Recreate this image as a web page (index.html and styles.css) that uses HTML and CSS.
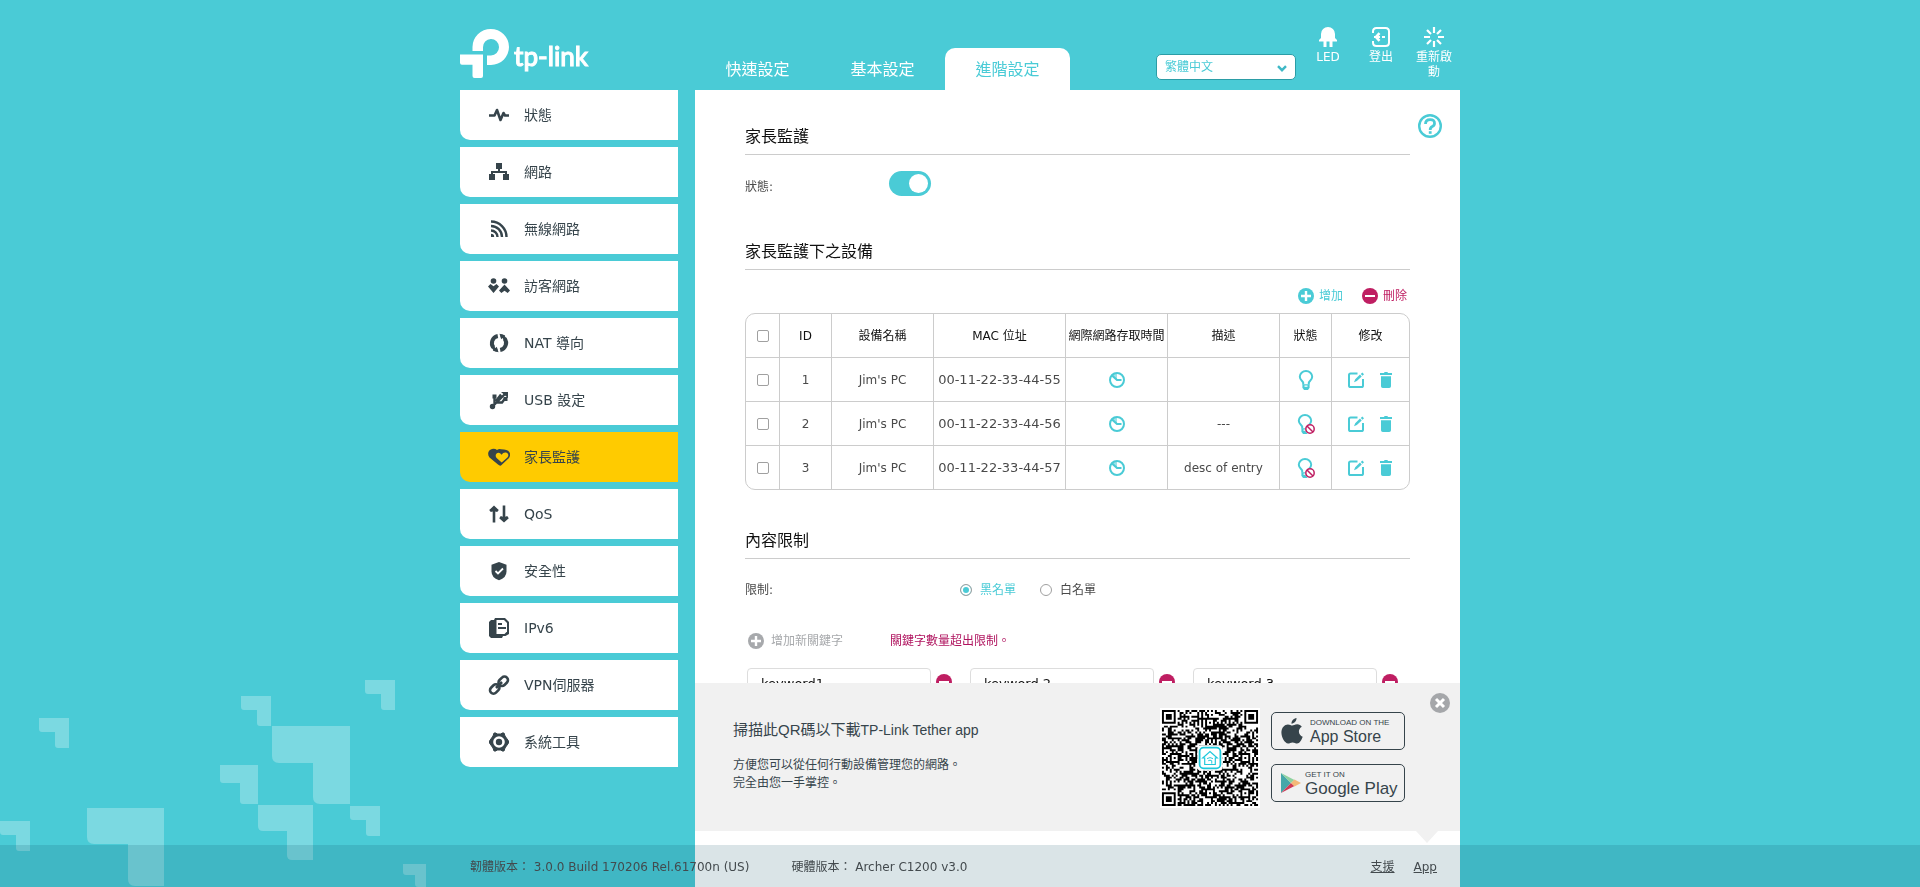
FILE: index.html
```html
<!DOCTYPE html>
<html lang="zh-Hant">
<head>
<meta charset="utf-8">
<meta name="viewport" content="width=device-width, initial-scale=1">
<title>TP-Link</title>
<link rel="stylesheet" href="styles.css">
</head>
<body>
<svg class="sprite" aria-hidden="true">
  <symbol id="i-plus" viewBox="0 0 16 16"><circle cx="8" cy="8" r="8" fill="currentColor"/><path d="M8 3v10M3 8h10" stroke="#fff" stroke-width="2.400"/></symbol>
  <symbol id="i-minus" viewBox="0 0 16 16"><circle cx="8" cy="8" r="8" fill="currentColor"/><path d="M3 8h10" stroke="#fff" stroke-width="2"/></symbol>
  <symbol id="i-clock" viewBox="0 0 16 16"><circle cx="8" cy="8" r="7" fill="none" stroke="currentColor" stroke-width="2"/><path d="M8 8L8 1A7 7 0 0 0 2.500 4z" fill="currentColor" opacity=".55"/><path d="M3 3.500L8 8h4.500" fill="none" stroke="currentColor" stroke-width="2.200"/></symbol>
  <symbol id="i-bulb" viewBox="0 0 16 20"><path d="M5.200 14.500v-1.800C5 11.300 1.800 10 1.800 6.800a6.200 5.800 0 0 1 12.400 0c0 3.200-3.200 4.500-3.400 5.900v1.800" fill="none" stroke="currentColor" stroke-width="2"/><path d="M4.400 14.300h7.200v3.400L10 20H6l-1.600-2.300z" fill="currentColor"/><path d="M6.500 15.500h3v1.300h-3z" fill="#fff"/></symbol>
  <symbol id="i-ban" viewBox="0 0 10 10"><circle cx="5" cy="5" r="5" fill="#fff"/><circle cx="5" cy="5" r="4.200" fill="none" stroke="currentColor" stroke-width="1.500"/><path d="M2 2l6 6" stroke="currentColor" stroke-width="1.500"/></symbol>
  <symbol id="i-edit" viewBox="0 0 16 16"><path d="M9.500 1.400H2.600q-1.600 0-1.600 1.600v10.400q0 1.600 1.600 1.600h10.800q1.600 0 1.600-1.600V7" fill="none" stroke="currentColor" stroke-width="2"/><path d="M6 10.200l1.200-3 4.800-4.600 1.700 1.800-4.800 4.600zM12.800 2l1.500-1.500L16 2.200l-1.500 1.500z" fill="currentColor"/></symbol>
  <symbol id="i-trash" viewBox="0 0 12 16"><path d="M0 1h4l.6-1h2.800L8 1h4v2H0zM1 4.300h10v9.900q0 1.800-1.800 1.800H2.800Q1 16 1 14.200z" fill="currentColor"/></symbol>
</svg>

<svg class="backdrop" viewBox="0 0 430 227" aria-hidden="true">
  <g fill="#fff" fill-opacity=".27">
    <path d="M39 58h30v30H58q-3 0-3-3V72H42q-3 0-3-3z"/>
    <path d="M241 36h30v30h-11q-3 0-3-3V50h-13q-3 0-3-3z"/>
    <path d="M365 20h30v30h-11q-3 0-3-3V34h-13q-3 0-3-3z"/>
    <path d="M350 146h30v30h-11q-3 0-3-3v-13h-13q-3 0-3-3z"/>
    <path d="M0 161h30v30H19q-3 0-3-3v-13H3q-3 0-3-3z"/>
    <path d="M220 105h38v39h-15q-3 0-3-3v-18h-17q-3 0-3-3z"/>
    <path d="M258 145h55v55h-21q-5 0-5-5v-24h-24q-5 0-5-5z"/>
    <path d="M272 66h78v78h-30q-7 0-7-7v-34h-34q-7 0-7-7z"/>
    <path d="M87 148h77v78h-29q-7 0-7-7v-35H94q-7 0-7-7z"/>
    <path d="M403 204h23v23h-8q-3 0-3-3v-9h-9q-3 0-3-3z"/>
  </g>
</svg>

<div class="page">
  <header class="header">
    <a class="logo" href="#" aria-label="tp-link">
      <svg width="49" height="49" viewBox="0 0 49 49" fill="#fff"><path d="M23 22H12.500V18a18.250 18 0 0 1 36.500 0A18.250 18 0 0 1 31 36h-4V26.500h4a8 8.300 0 1 0-8-8z"/><path d="M0 25.500h23V47q0 2-2 2h-6.500q-2 0-2-2V35.700H2q-2 0-2-2z"/></svg>
      <span>tp-link</span>
    </a>
    <nav class="tabs">
      <a class="tab" href="#">快速設定</a>
      <a class="tab" href="#">基本設定</a>
      <a class="tab tab-on" href="#">進階設定</a>
    </nav>
    <div class="lang">
      <select aria-label="語言"><option>繁體中文</option></select>
      <svg width="10" height="7" viewBox="0 0 10 7" fill="none" stroke="#3eb8c6" stroke-width="2.400"><path d="M1 1.200l4 4 4-4"/></svg>
    </div>
    <div class="tools">
      <button class="tool" type="button">
        <svg width="20" height="20" viewBox="0 0 20 20" fill="#fff"><path d="M3 11V7a7 7 0 0 1 14 0v4l2 2v1.500H1V13zM5.500 14H8.500v6h-3zM11.500 14h3v6h-3z"/></svg>
        <span>LED</span>
      </button>
      <button class="tool" type="button">
        <svg width="20" height="20" viewBox="0 0 20 20" fill="none" stroke="#fff" stroke-width="2"><path d="M2 6V4.500Q2 1 5.500 1h9Q18 1 18 4.500v11q0 3.500-3.500 3.500h-9Q2 19 2 15.500V14"/><path d="M11 10h3"/><path d="M8.500 6.200L5 10l3.500 3.800" stroke-width="2.600"/><path d="M3 10h6"/></svg>
        <span>登出</span>
      </button>
      <button class="tool" type="button">
        <svg width="20" height="20" viewBox="0 0 20 20" fill="none" stroke="#fff" stroke-width="2.200"><path d="M10 0v6M10 14v6M0 10h6M14 10h6M3 3l4 4M13 13l4 4M17 3l-4 4M7 13l-4 4"/></svg>
        <span>重新啟動</span>
      </button>
    </div>
  </header>

  <div class="columns">
    <nav class="side">
      <a class="item" href="#"><svg viewBox="0 0 22 22" fill="none" stroke="#36444b" stroke-width="2.600" stroke-linejoin="round"><path d="M1 11.500h5.500L9 6l3.500 10L15.500 9l1.500 2.500h4"/></svg>狀態</a>
      <a class="item" href="#"><svg viewBox="0 0 22 22" fill="#36444b"><path d="M8 2h6v6h-2v2h7v3h2v6h-6v-6h2v-1H5v1h2v6H1v-6h2v-3h7V8H8z"/></svg>網路</a>
      <a class="item" href="#"><svg viewBox="0 0 22 22" fill="none" stroke="#36444b" stroke-width="2.400"><path d="M3 3.500A15.500 15.500 0 0 1 18.500 19M3 8a11 11 0 0 1 11 11M3 12.500A6.500 6.500 0 0 1 9.500 19"/><path d="M3 15.800q3.200 0 3.200 3.200H3z" fill="#36444b" stroke="none"/></svg>無線網路</a>
      <a class="item" href="#"><svg viewBox="0 0 22 22" fill="#36444b"><circle cx="5.500" cy="6" r="2.800"/><circle cx="16.500" cy="6" r="2.800"/><path d="M0 11.500L2.500 9l3 2.200 3-2.200 2.500 2.500-5.500 6.500zM16.500 9.500l5.500 6-2.300 2.500-3.200-2.300-3.200 2.300-2.300-2.500z"/></svg>訪客網路</a>
      <a class="item" href="#"><svg viewBox="0 0 22 22" fill="none" stroke="#36444b" stroke-width="4"><path d="M9.800 4a7.200 7.200 0 0 0-4.300 11.600M12.200 18a7.200 7.200 0 0 0 4.300-11.600"/><path d="M11.500 1.800l5.700 1.400-4 4zM10.500 20.200l-5.700-1.400 4-4z" fill="#36444b" stroke="none"/><path d="M13 3.500a8 8 0 0 1 4.500 4.200M9 18.500a8 8 0 0 1-4.500-4.200" stroke-width="3"/></svg>NAT 導向</a>
      <a class="item" href="#"><svg viewBox="0 0 22 22" fill="none" stroke="#36444b" stroke-width="2.400"><path d="M5 17L17 5M6.500 15.500V8M8 13.500h6l3-4M8 12l5-6.500"/><circle cx="4.500" cy="17.500" r="2.700" fill="#36444b" stroke="none"/><path d="M13 3h7v6zM4.500 5.500h4v4h-4zM15.500 8h4v4h-4z" fill="#36444b" stroke="none"/></svg>USB 設定</a>
      <a class="item item-on" href="#"><svg viewBox="0 0 22 22"><path d="M13 19.500Q11.500 20 10 18.500L1.500 11.500C-1 8.500 0 4 4 3q3-.6 5 1 2-1.400 4-.8l3 .3c6 .3 7.500 5 5 8.500z" fill="#36444b"/><path d="M13.700 16.500L8.600 12c-1.800-2.200-.6-5 1.800-5.200q1.800 0 3.200 2 1.500-2.600 4.200-2.300c2.600.4 3.400 3.200 1.600 5.100z" fill="#ffcb00"/></svg>家長監護</a>
      <a class="item" href="#"><svg viewBox="0 0 22 22" fill="#36444b"><path d="M6 2.500l4.800 4.600-1.600 2L7.300 8.500V19.500H4.700V8.500l-1.900.6-1.600-2zM16 19.500l-4.800-4.200 1.600-2.200 1.900.6V2.500h2.600v11.200l1.900-.6 1.600 2.200z"/></svg>QoS</a>
      <a class="item" href="#"><svg viewBox="0 0 22 22"><path d="M11 2l7.500 2.700v6.800q0 6.300-7.500 8.800-7.500-2.500-7.500-8.800V4.700z" fill="#36444b"/><path d="M7.500 11l2.500 2.500 5-5" fill="none" stroke="#fff" stroke-width="1.800"/></svg>安全性</a>
      <a class="item" href="#"><svg viewBox="0 0 22 22"><path d="M1 5l2-2h3l1-2h10l4 4v12l-3.500 2H15l-1 2H3l-2-2z" fill="#36444b"/><path d="M8.500 3H16l3 3v8.500L16.500 17h-8z" fill="#fff"/><path d="M10 7h4M10 11h8" stroke="#36444b" stroke-width="2"/></svg>IPv6</a>
      <a class="item" href="#"><svg viewBox="0 0 22 22" fill="none" stroke="#36444b" stroke-width="2.600"><rect x="10" y="3.800" width="10.500" height="7" rx="3.500" transform="rotate(-45 15.200 7.300)"/><rect x="1.500" y="11.500" width="10.500" height="7" rx="3.500" transform="rotate(-45 6.700 15)"/><path d="M8 14l6-6"/></svg>VPN伺服器</a>
      <a class="item" href="#"><svg viewBox="0 0 22 22"><path d="M6 2h2l1 1h4l1-1h2l1 3 3.500 5v2L17 17l-1 3h-2l-1-1H9l-1 1H6l-1-3-3.500-5v-2L5 5z" fill="#36444b" stroke="#36444b"/><circle cx="11" cy="11" r="5.800" fill="#fff"/><circle cx="11" cy="11" r="3.200" fill="#36444b"/></svg>系統工具</a>
    </nav>

    <main class="main">
      <button class="help" type="button" aria-label="說明"><svg width="24" height="24" viewBox="0 0 24 24" fill="none" stroke="#4acbd6"><circle cx="12" cy="12" r="10.800" stroke-width="2.400"/><path d="M7.500 10q0-4.400 4.600-4.400T16.500 9.400q0 2-2.200 3T12.200 16" stroke-width="2.800"/><path d="M12.200 17.200v2.600" stroke-width="2.800"/></svg></button>

      <section>
        <h2>家長監護</h2>
        <div class="field field-switch">
          <label class="name" for="state">狀態:</label>
          <input id="state" class="switch" type="checkbox" role="switch" checked>
        </div>
      </section>

      <section class="devices">
        <h2>家長監護下之設備</h2>
        <div class="actions">
          <button class="act add" type="button"><svg class="ic"><use href="#i-plus"/></svg>增加</button>
          <button class="act del" type="button"><svg class="ic"><use href="#i-minus"/></svg>刪除</button>
        </div>
        <table class="grid">
          <colgroup><col class="c-check"><col class="c-id"><col class="c-name"><col class="c-mac"><col class="c-time"><col class="c-desc"><col class="c-state"><col></colgroup>
          <thead>
            <tr><th><input type="checkbox" class="box" aria-label="全選"></th><th>ID</th><th>設備名稱</th><th>MAC 位址</th><th>網際網路存取時間</th><th>描述</th><th>狀態</th><th>修改</th></tr>
          </thead>
          <tbody>
            <tr><td><input type="checkbox" class="box" aria-label="1"></td><td>1</td><td>Jim's PC</td><td class="mac">00-11-22-33-44-55</td>
              <td><button class="ib" type="button" aria-label="時間"><svg class="ic"><use href="#i-clock"/></svg></button></td><td></td>
              <td><button class="ib bulb" type="button" aria-label="啟用"><svg class="bl"><use href="#i-bulb"/></svg></button></td>
              <td><div class="mod"><button class="ib" type="button" aria-label="編輯"><svg class="ic"><use href="#i-edit"/></svg></button><button class="ib" type="button" aria-label="刪除"><svg class="tr"><use href="#i-trash"/></svg></button></div></td></tr>
            <tr><td><input type="checkbox" class="box" aria-label="2"></td><td>2</td><td>Jim's PC</td><td class="mac">00-11-22-33-44-56</td>
              <td><button class="ib" type="button" aria-label="時間"><svg class="ic"><use href="#i-clock"/></svg></button></td><td>---</td>
              <td><button class="ib bulb off" type="button" aria-label="停用"><svg class="bl"><use href="#i-bulb"/></svg><svg class="ban"><use href="#i-ban"/></svg></button></td>
              <td><div class="mod"><button class="ib" type="button" aria-label="編輯"><svg class="ic"><use href="#i-edit"/></svg></button><button class="ib" type="button" aria-label="刪除"><svg class="tr"><use href="#i-trash"/></svg></button></div></td></tr>
            <tr><td><input type="checkbox" class="box" aria-label="3"></td><td>3</td><td>Jim's PC</td><td class="mac">00-11-22-33-44-57</td>
              <td><button class="ib" type="button" aria-label="時間"><svg class="ic"><use href="#i-clock"/></svg></button></td><td>desc of entry</td>
              <td><button class="ib bulb off" type="button" aria-label="停用"><svg class="bl"><use href="#i-bulb"/></svg><svg class="ban"><use href="#i-ban"/></svg></button></td>
              <td><div class="mod"><button class="ib" type="button" aria-label="編輯"><svg class="ic"><use href="#i-edit"/></svg></button><button class="ib" type="button" aria-label="刪除"><svg class="tr"><use href="#i-trash"/></svg></button></div></td></tr>
          </tbody>
        </table>
      </section>

      <section class="limits">
        <h2>內容限制</h2>
        <div class="field field-radio">
          <span class="name">限制:</span>
          <div class="radios">
            <label><input type="radio" name="list" checked><span>黑名單</span></label>
            <label><input type="radio" name="list"><span>白名單</span></label>
          </div>
        </div>
        <div class="addkey">
          <button class="act" type="button" disabled><svg class="ic"><use href="#i-plus"/></svg>增加新關鍵字</button>
          <span class="error">關鍵字數量超出限制。</span>
        </div>
        <div class="keys">
          <div class="key"><input type="text" value="keyword1" aria-label="關鍵字 1"><button class="ib del" type="button" aria-label="移除"><svg class="ic"><use href="#i-minus"/></svg></button></div>
          <div class="key"><input type="text" value="keyword 2" aria-label="關鍵字 2"><button class="ib del" type="button" aria-label="移除"><svg class="ic"><use href="#i-minus"/></svg></button></div>
          <div class="key"><input type="text" value="keyword 3" aria-label="關鍵字 3"><button class="ib del" type="button" aria-label="移除"><svg class="ic"><use href="#i-minus"/></svg></button></div>
        </div>
      </section>
    </main>
  </div>
</div>

<div class="overlay">
  <aside class="promo">
    <div class="words">
      <h3>掃描此QR碼以下載<span>TP-Link Tether app</span></h3>
      <p>方便您可以從任何行動設備管理您的網路。<br>完全由您一手掌控。</p>
    </div>
    <svg class="qr" id="qr" viewBox="-1 -1 51 51" role="img" aria-label="QR">
      <rect x="-1" y="-1" width="51" height="51" fill="#fff"/>
      <path id="modules" fill="#000"/>
      <rect x="18" y="18" width="13" height="13" rx="2" fill="#fff"/>
      <g fill="none" stroke="#1fc8db"><rect x="19.200" y="19.200" width="10.600" height="10.600" rx="2" stroke-width=".9"/><path d="M20.800 24.500l3.700-3.300 3.700 3.300h-1v3.300h-5.400v-3.300z" stroke-width=".6"/><path d="M23 24.800q1.500-1 3 0M23.600 25.900q.9-.6 1.800 0v1.500" stroke-width=".5"/></g>
    </svg>
    <div class="stores">
      <a class="store" href="#"><svg width="22" height="26" viewBox="0 0 22 26" fill="#36444b"><path d="M15.500 0c.2 2.800-2 5.500-5 5.700C10.300 3 12.600.4 15.500 0zM11.200 7.500c1.200 0 2.700-1.300 5-1.300 2 0 3.600 1 4.600 2.500-4.400 2.600-3.500 8.300.9 10-.9 2.800-3.200 6.800-5.600 6.800-1.700 0-2.400-1.100-4.500-1.100s-2.900 1.100-4.500 1.100C3.700 25.500.4 19.400.4 14.600c0-5.100 3.300-8.200 6.500-8.200 2 0 3.200 1.100 4.300 1.100z"/></svg><span><small>DOWNLOAD ON THE</small>App Store</span></a>
      <a class="store play" href="#"><svg width="20" height="22" viewBox="0 0 20 22"><path d="M0 1v20l10-10z" fill="#45a7a9"/><path d="M0 1l10 10 3.500-3z" fill="#8ed2a0"/><path d="M0 21l10-10 3.500 3z" fill="#cf3a56"/><path d="M10 11l3.500-3.500L20 11l-6.500 3.500z" fill="#f3b878"/></svg><span><small>GET IT ON</small>Google Play</span></a>
    </div>
    <button class="close" type="button" aria-label="關閉"><svg width="20" height="20" viewBox="0 0 20 20"><circle cx="10" cy="10" r="10" fill="#a5a7aa"/><path d="M6 6l8 8M14 6l-8 8" stroke="#fff" stroke-width="3"/></svg></button>
  </aside>
</div>

<footer class="footer">
  <div class="foot">
    <span>韌體版本： 3.0.0 Build 170206 Rel.61700n (US)</span>
    <span>硬體版本： Archer C1200 v3.0</span>
    <a class="support" href="#">支援</a>
    <a href="#">App</a>
  </div>
</footer>
<script src="qr.js"></script>
</body>
</html>
```
FILE: styles.css
```css
* { box-sizing: border-box; }

body {
  margin: 0;
  min-height: 100vh;
  background: #4acbd6;
  color: #36444b;
  font: 12px/18px "DejaVu Sans", "Noto Sans CJK TC", sans-serif;
}

a { color: inherit; text-decoration: none; }
button { padding: 0; border: 0; background: none; font: inherit; color: inherit; }
svg { display: block; flex: none; }
h2, h3, p { margin: 0; font-weight: 400; }

.sprite { position: absolute; width: 0; height: 0; }
.backdrop { position: fixed; left: 0; bottom: 0; z-index: -1; width: 430px; height: 227px; }

.page { max-width: 1000px; margin: 0 auto; }

/* header */
.header { display: flex; align-items: flex-end; height: 90px; color: #fff; }
.logo { display: flex; gap: 5px; flex: none; width: 235px; padding-bottom: 12px; }
.logo span { padding-top: 11px; font: 500 26px/32px Lato, sans-serif; -webkit-text-stroke: 1px #fff; }
.tabs { display: flex; }
.tab { width: 125px; padding-top: 2px; border-radius: 10px 10px 0 0; font-size: 16px; line-height: 40px; text-align: center; }
.tab-on { background: #fff; color: #4acbd6; }

.lang { position: relative; width: 140px; margin: 0 0 10px auto; }
.lang select {
  appearance: none;
  display: block;
  width: 100%;
  height: 26px;
  padding: 0 8px;
  border: 1px solid #2b9da6;
  border-radius: 5px;
  background: #fff;
  color: #4acbd6;
  font: inherit;
}
.lang svg { position: absolute; right: 9px; top: 11px; pointer-events: none; }

.tools { display: flex; align-self: flex-start; gap: 13px; padding-top: 27px; margin: 0 6px 0 12px; }
.tool { display: flex; flex-direction: column; align-items: center; gap: 3px; width: 40px; line-height: 15px; }

/* side menu */
.columns { display: flex; gap: 17px; }
.side { display: flex; flex-direction: column; flex: none; gap: 7px; width: 218px; }
.item {
  display: flex;
  align-items: center;
  gap: 14px;
  height: 50px;
  padding-left: 28px;
  border-radius: 0 0 0 10px;
  background: #fff;
  font-size: 14px;
}
.item svg { width: 22px; height: 22px; }
.item-on { background: #ffcb00; }

/* content */
.main { position: relative; flex: 1; min-height: calc(100vh - 90px); padding: 32px 50px 0; background: #fff; color: #4a4a4a; }
.help { position: absolute; right: 18px; top: 24px; }
h2 { padding-bottom: 2px; border-bottom: 1px solid #ccc; color: #111; font-size: 16px; line-height: 30px; }
.field { display: flex; }
.name { width: 144px; }
.field-switch { align-items: flex-end; margin-top: 16px; }
.switch {
  appearance: none;
  display: flex;
  align-items: center;
  justify-content: flex-end;
  width: 42px;
  height: 25px;
  margin: 0;
  padding: 3px;
  border-radius: 13px;
  background: #4acbd6;
}
.switch::before { content: ""; width: 19px; height: 19px; border-radius: 50%; background: #fff; }

.devices { margin-top: 41px; }
.actions { display: flex; justify-content: flex-end; gap: 19px; margin: 18px 3px 9px; }
.act { display: flex; align-items: center; gap: 5px; line-height: 16px; }
.ic { width: 16px; height: 16px; }
.add { color: #4acbd6; }
.del { color: #bf1e62; }

.grid {
  width: 100%;
  border: 1px solid #ccc;
  border-radius: 10px;
  border-spacing: 0;
  table-layout: fixed;
  text-align: center;
}
.c-check { width: 34px; }
.c-id, .c-state { width: 52px; }
.c-name, .c-time { width: 102px; }
.c-mac { width: 132px; }
.c-desc { width: 112px; }
.grid th, .grid td { height: 44px; padding: 0; border-right: 1px solid #ccc; border-bottom: 1px solid #ccc; white-space: nowrap; }
.grid th { color: #111; font-weight: 400; }
.grid th:last-child, .grid td:last-child { border-right: 0; }
.grid tr:last-child td { height: 43px; border-bottom: 0; }
.grid .mac { font-size: 13px; }
.box { appearance: none; display: block; width: 12px; height: 12px; margin: 0 auto; border: 1px solid #a0a0a0; border-radius: 2px; }
.ib { display: block; margin: 0 auto; color: #4acbd6; }
.bulb { position: relative; width: 16px; }
.off { width: 18px; }
.bl { width: 16px; height: 20px; }
.ban { position: absolute; right: 0; bottom: 0; width: 10px; height: 10px; color: #bf1e62; }
.mod { display: flex; align-items: center; justify-content: center; gap: 16px; padding-right: 2px; }
.mod .ib { margin: 0; }
.tr { width: 12px; height: 16px; }

.limits { margin-top: 36px; }
.field-radio { margin-top: 22px; }
.radios { display: flex; gap: 24px; padding-left: 71px; }
.radios label { display: flex; align-items: center; gap: 8px; }
.radios input { appearance: none; width: 12px; height: 12px; margin: 0; border: 1px solid #a0a0a0; border-radius: 50%; }
.radios input:checked { background: #4acbd6; box-shadow: inset 0 0 0 2px #fff; }
.radios input:checked + span { color: #4acbd6; }
.addkey { display: flex; margin-top: 33px; padding-left: 3px; }
.addkey .act { gap: 7px; width: 142px; color: #a7a9ac; }
.error { color: #b0145f; }
.keys { display: flex; gap: 18px; margin-top: 18px; padding-left: 2px; }
.key { display: flex; align-items: flex-start; gap: 5px; }
.key input { width: 184px; height: 30px; padding: 0 13px; border: 1px solid #ddd; border-radius: 4px; color: #111; font: inherit; font-size: 13px; }
.key .ib { padding-top: 6px; color: #bf1e62; }

/* app banner */
.overlay { position: fixed; left: 0; right: 0; bottom: 56px; max-width: 1000px; margin: 0 auto; padding-left: 235px; }
.promo { position: relative; display: flex; align-items: flex-start; height: 148px; padding: 25px 55px 0 38px; background: #f1f1f1; }
.promo::after {
  content: "";
  position: absolute;
  top: 100%;
  right: 22px;
  border: solid transparent;
  border-width: 12px 11px 0;
  border-top-color: #f1f1f1;
}
.words { flex: 1; padding-top: 12px; }
.words h3 { font-size: 15px; line-height: 20px; }
.words h3, .words span { font-family: "Liberation Sans", "Noto Sans CJK TC", sans-serif; }
.words span { font-size: 14px; }
.words p { margin-top: 16px; }
.qr { width: 100px; height: 100px; }
.stores { display: flex; flex-direction: column; gap: 14px; margin: 4px 0 0 11px; }
.store {
  display: flex;
  align-items: center;
  gap: 7px;
  width: 134px;
  height: 38px;
  padding-left: 9px;
  border: 1px solid #36444b;
  border-radius: 5px;
  font: 16px/16px "Liberation Sans", sans-serif;
  white-space: nowrap;
}
.store small { display: block; font-size: 8px; line-height: 12px; }
.play { gap: 4px; font-size: 17px; }
.close { position: absolute; right: 10px; top: 10px; }

/* footer */
.footer { position: fixed; left: 0; right: 0; bottom: 0; background: rgba(5, 76, 97, .15); color: #434a4e; }
.foot { display: flex; gap: 42px; max-width: 1000px; margin: 0 auto; padding: 13px 23px 11px 10px; }
.foot a { text-decoration: underline; }
.support { margin-left: auto; margin-right: -23px; }
```
FILE: qr.js
```js
// Fills the 49 x 49 module grid: finders, alignment marks, timing lines and data.
(function () {
  var n = 49, seed = 7321, d = "";
  function rnd() { seed = (seed * 1103515245 + 12345) % 2147483648; return seed / 2147483648; }
  function ring(dx, dy) { return Math.max(Math.abs(dx), Math.abs(dy)); }
  var finders = [[3, 3], [45, 3], [3, 45]];
  var marks = [[24, 6], [6, 24], [42, 24], [24, 42], [42, 42]];
  function dark(x, y) {
    var data = rnd() < 0.54, i, r;
    for (i = 0; i < finders.length; i++) {
      r = ring(x - finders[i][0], y - finders[i][1]);
      if (r <= 4) return r === 3 || r < 2;
    }
    for (i = 0; i < marks.length; i++) {
      r = ring(x - marks[i][0], y - marks[i][1]);
      if (r <= 2) return r !== 1;
    }
    if (x === 6 || y === 6) return (x + y) % 2 === 0;
    return data;
  }
  for (var y = 0; y < n; y++) {
    for (var x = 0; x < n; x++) {
      if (dark(x, y)) d += "M" + x + " " + y + "h1v1h-1z";
    }
  }
  document.getElementById("modules").setAttribute("d", d);
})();
```
